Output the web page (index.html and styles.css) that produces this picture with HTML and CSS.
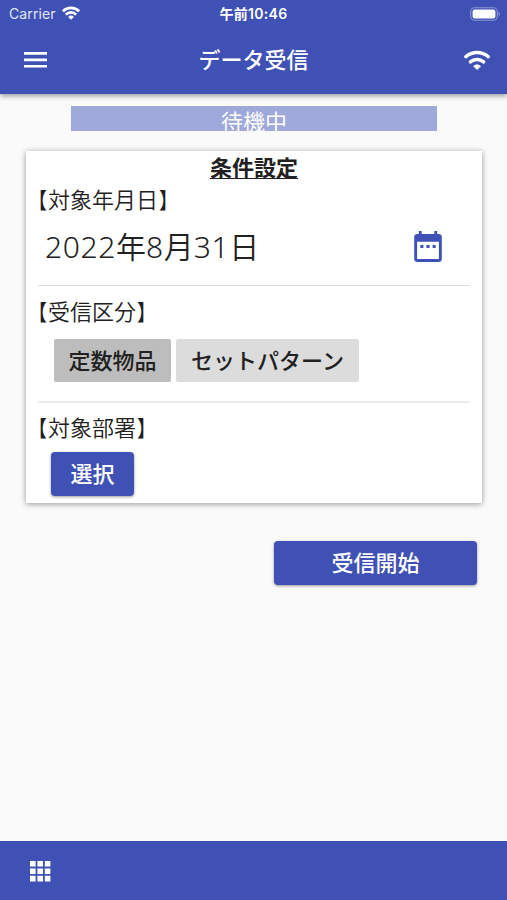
FILE: index.html
```html
<!DOCTYPE html>
<html lang="ja">
<head>
<meta charset="utf-8">
<meta name="viewport" content="width=device-width, initial-scale=1">
<title>データ受信</title>
<link rel="stylesheet" href="styles.css">
</head>
<body>
<header class="header">
  <div class="status">
    <div class="carrier"><span>Carrier</span>
      <svg width="18" height="14" viewBox="0 0 18 14" fill="none" stroke="#fff" stroke-width="2.7"><path d="M.9 5.300a11.400 11.400 0 0 1 16.200 0M3.800 8.600a7.300 7.300 0 0 1 10.400 0"/><path d="M9 13.800 6.100 10.900a4.100 4.100 0 0 1 5.800 0z" fill="#fff" stroke="none"/></svg>
    </div>
    <div class="time">午前10:46</div>
    <svg class="battery" width="31" height="14" viewBox="0 0 31 14"><rect x=".7" y=".7" width="26.6" height="12.6" rx="3.8" fill="none" stroke="#8e98d2" stroke-width="1.1"/><rect x="2.6" y="2.5" width="22.8" height="9" rx="2.1" fill="#fff"/><path d="M28.6 4.8c1.8.8 1.8 3.6 0 4.4z" fill="#8e98d2"/></svg>
  </div>
  <div class="appbar">
    <svg class="menu" width="23" height="16" viewBox="0 0 23 16" fill="#fff"><path d="M0 0h23v2.700H0zM0 6.500h23v2.700H0zM0 12.900h23v2.700H0z"/></svg>
    <h1>データ受信</h1>
    <svg class="wifi" width="28" height="21" viewBox="0 0 28 21" fill="none" stroke="#fff" stroke-width="3.500" stroke-linecap="round"><path d="M2.800 6.700a17 17 0 0 1 22.400 0M7.400 11.800a10.200 10.200 0 0 1 13.200 0"/><path d="m14 19.500-3.500-3.200c1.800-2 5.200-2 7 0z" fill="#fff" stroke="#fff" stroke-width=".6" stroke-linejoin="round"/></svg>
  </div>
</header>
<main>
  <div class="state"><span>待機中</span></div>
  <section class="card">
    <h2>条件設定</h2>
    <div class="label first"><i class="open">【</i>対象年月日<i class="close">】</i></div>
    <div class="date">
      <span><b>2022</b>年<b>8</b>月<b>31</b>日</span>
      <svg width="28" height="32" viewBox="0 0 28 32"><path fill="#3f51b5" fill-rule="evenodd" d="M4.800 0h2.900v3.100h12.600V0h2.900v3.100h1.400A3.200 3.200 0 0 1 27.800 6.300v21.500A3.100 3.100 0 0 1 24.700 30.900H3.300A3.100 3.100 0 0 1 .2 27.800V6.300A3.200 3.200 0 0 1 3.400 3.100h1.400zM3.100 10.800v17.100h21.800V10.800zM6.300 14h3.100v3.100H6.300zM12.450 14h3.100v3.100h-3.100zM18.600 14h3.100v3.100h-3.100z"/></svg>
    </div>
    <hr>
    <div class="label"><i class="open">【</i>受信区分<i class="close">】</i></div>
    <div class="toggles"><button class="chip selected"><span>定数物品</span></button><button class="chip"><span>セットパターン</span></button></div>
    <hr class="soft">
    <div class="label"><i class="open">【</i>対象部署<i class="close">】</i></div>
    <button class="primary pick">選択</button>
  </section>
  <button class="primary start">受信開始</button>
</main>
<footer>
  <svg width="21" height="21" viewBox="0 0 21 21" fill="#fff"><path d="M0 0h5.600v5.600H0zM7.400 0H13v5.600H7.400zM14.800 0h5.600v5.600h-5.600zM0 7.400h5.600V13H0zM7.400 7.400H13V13H7.400zM14.800 7.400h5.600V13h-5.600zM0 14.800h5.600v5.600H0zM7.400 14.800H13v5.600H7.400zM14.800 14.800h5.600v5.600h-5.600z"/></svg>
</footer>
</body>
</html>
```
FILE: styles.css
```css
* { box-sizing: border-box; }
body {
  margin: 0;
  height: 900px;
  display: flex;
  flex-direction: column;
  overflow: hidden;
  background: #fafafa;
  color: #212121;
  font-family: "Noto Sans CJK JP", sans-serif;
  font-size: 22px;
}
svg { display: block; flex: none; }
button {
  border: 0;
  padding: 0 0 4px;
  color: inherit;
  font: inherit;
  font-weight: 500;
}
.header {
  height: 94px;
  flex: none;
  background: #3f51b5;
  color: #fff;
  box-shadow: 0 2px 5px rgba(0, 0, 0, .38);
}
.status {
  height: 27px;
  display: grid;
  grid-template-columns: 1fr auto 1fr;
  align-items: center;
  padding: 0 6px 0 9px;
  font-size: 14px;
  line-height: 20px;
}
.carrier { display: flex; align-items: center; gap: 6px; font-family: Inter, sans-serif; color: #e2e5f4; letter-spacing: .1px; }
.carrier svg { margin-top: -2px; }
.time { padding-right: 3px; font-family: Inter, "Noto Sans CJK JP", sans-serif; font-weight: 600; letter-spacing: .3px; }
.battery { justify-self: end; }
.appbar {
  height: 66px;
  display: grid;
  grid-template-columns: 1fr auto 1fr;
  align-items: center;
  padding: 0 16px 0 24px;
}
h1 { margin: 0; padding: 0 8px 4px 0; font-size: 22px; line-height: 32px; font-weight: 500; }
.wifi { justify-self: end; }
main { flex: 1; padding: 12px 25px 0 26px; display: flex; flex-direction: column; }
.state {
  height: 25px;
  margin: 0 45px;
  background: #9fa8da;
  color: #fff;
  text-align: center;
  line-height: 28px;
}
.card {
  height: 352px;
  margin-top: 20px;
  background: #fff;
  box-shadow: 0 1px 6px rgba(0, 0, 0, .4);
}
h2 {
  margin: 0;
  height: 32px;
  font-size: 22px;
  line-height: 30px;
  font-weight: 700;
  text-align: center;
  text-decoration: underline;
  text-decoration-thickness: 1px;
  text-underline-offset: 2px;
}
.label { height: 32px; line-height: 27px; font-weight: 350; }
.label i { display: inline-block; width: 22px; font-style: normal; font-weight: 400; }
.open { transform: translateX(-1px) scaleX(.85); transform-origin: right; }
.close { transform: translateX(1px) scaleX(.85); transform-origin: left; }
.first { margin-top: 2px; }
.date {
  height: 68px;
  display: flex;
  align-items: center;
  justify-content: space-between;
  padding: 0 40px 8px 19px;
  font-size: 30px;
  line-height: 44px;
  font-weight: 350;
}
.date span { margin-top: -2px; }
.date b { font-family: "Noto Sans", sans-serif; font-weight: 350; letter-spacing: .6px; }
hr { height: 1px; margin: 0 12px 11px; border: 0; background: #dedede; }
hr.soft { height: 2px; margin-bottom: 10px; background: #ebebeb; }
.toggles { display: flex; gap: 5px; height: 72px; padding: 10px 0 0 28px; }
.chip { width: 183px; height: 43px; border-radius: 2px; background: #dcdcdc; }
.chip.selected { width: 117px; background: #bdbdbd; }
.primary {
  height: 43px;
  border-radius: 4px;
  background: #3f51b5;
  color: #fff;
  box-shadow: 0 1px 3px rgba(0, 0, 0, .4);
}
.pick { display: block; width: 83px; height: 44px; margin: 7px 0 0 25px; }
.start { width: 203px; height: 44px; margin: 38px 5px 0 0; align-self: flex-end; }
footer { flex: none; height: 59px; padding: 20px 30px; background: #3f51b5; }
```
